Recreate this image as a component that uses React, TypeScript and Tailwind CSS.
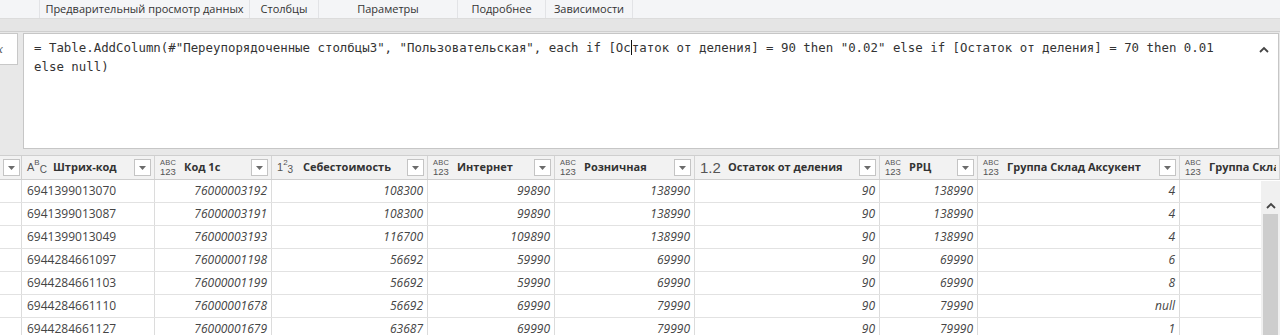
import React from "react";

const cols = [22, 133, 117, 156, 127, 140, 185, 98, 202, 100];

type Hdr = { icon: "abc123" | "abc" | "123" | "12"; label: string; dd: boolean };

const headers: Hdr[] = [
  { icon: "abc", label: "Штрих-код", dd: true },
  { icon: "abc123", label: "Код 1с", dd: true },
  { icon: "123", label: "Себестоимость", dd: true },
  { icon: "abc123", label: "Интернет", dd: true },
  { icon: "abc123", label: "Розничная", dd: true },
  { icon: "12", label: "Остаток от деления", dd: true },
  { icon: "abc123", label: "РРЦ", dd: true },
  { icon: "abc123", label: "Группа Склад Аксукент", dd: true },
  { icon: "abc123", label: "Группа Склад Аксукент 2", dd: false },
];

const rows = [
  ["6941399013070", "76000003192", "108300", "99890", "138990", "90", "138990", "4"],
  ["6941399013087", "76000003191", "108300", "99890", "138990", "90", "138990", "4"],
  ["6941399013049", "76000003193", "116700", "109890", "138990", "90", "138990", "4"],
  ["6944284661097", "76000001198", "56692", "59990", "69990", "90", "69990", "6"],
  ["6944284661103", "76000001199", "56692", "59990", "69990", "90", "69990", "8"],
  ["6944284661110", "76000001678", "56692", "69990", "79990", "90", "79990", "null"],
  ["6944284661127", "76000001679", "63687", "69990", "79990", "90", "79990", "1"],
];

function Dropdown() {
  return (
    <div className="w-[17px] h-[17px] shrink-0 border border-[#c4c4c4] bg-white flex items-center justify-center">
      <svg width="7" height="4" viewBox="0 0 7 4">
        <path d="M0 0 L7 0 L3.5 4 Z" fill="#6b6b6b" />
      </svg>
    </div>
  );
}

function TypeIcon({ t }: { t: Hdr["icon"] }) {
  if (t === "abc123")
    return (
      <div className="flex flex-col w-[18px] shrink-0 text-[#555] leading-[8px] font-['Liberation_Sans',sans-serif]">
        <span className="text-[7.5px] tracking-[0.2px]">ABC</span>
        <span className="text-[9.5px] leading-[9px]">123</span>
      </div>
    );
  if (t === "abc")
    return (
      <div className="w-[20px] shrink-0 text-[#555] font-['Liberation_Sans',sans-serif] text-[11px] leading-none flex items-start">
        <span className="mt-[2px]">A</span>
        <span className="text-[8px] -mt-[1px]">B</span>
        <span className="text-[10px] mt-[5px]">C</span>
      </div>
    );
  if (t === "123")
    return (
      <div className="w-[20px] shrink-0 text-[#555] font-['Liberation_Sans',sans-serif] text-[11px] leading-none flex items-start">
        <span className="mt-[2px]">1</span>
        <span className="text-[8px] -mt-[1px]">2</span>
        <span className="text-[10px] mt-[5px]">3</span>
      </div>
    );
  return (
    <div className="w-[22px] shrink-0 text-[#555] font-['Liberation_Sans',sans-serif] text-[15px] leading-none">1.2</div>
  );
}

function ChevronUp({ className }: { className?: string }) {
  return (
    <svg width="10" height="7" viewBox="0 0 10 7" className={className}>
      <path d="M1 6 L5 2 L9 6" fill="none" stroke="#444" strokeWidth="1.8" />
    </svg>
  );
}

const tabs: { label: string; w: number }[] = [
  { label: "Предварительный просмотр данных", w: 210 },
  { label: "Столбцы", w: 69 },
  { label: "Параметры", w: 139 },
  { label: "Подробнее", w: 88 },
  { label: "Зависимости", w: 88 },
];

export default function App() {
  const line1 =
    '= Table.AddColumn(#"Переупорядоченные столбцы3", "Пользовательская", each if [Ос';
  const line1b =
    'таток от деления] = 90 then "0.02" else if [Остаток от деления] = 70 then 0.01';
  return (
    <div className="w-[1280px] h-[335px] overflow-hidden bg-[#e8e8e8] font-['Open_Sans','Noto_Sans',sans-serif] flex flex-col">
      {/* Tab bar */}
      <div className="h-[19px] shrink-0 bg-[#f4f5f7] flex pl-[39px] border-b border-[#dcdcdc]">
        {tabs.map((t) => (
          <div
            key={t.label}
            style={{ width: t.w }}
            className="border-l border-[#e2e3e6] last:border-r flex items-center justify-center text-[11px] text-[#333] whitespace-nowrap"
          >
            {t.label}
          </div>
        ))}
      </div>
      {/* gray strip */}
      <div className="h-[13px] shrink-0 bg-[#e5e5e5] border-b border-[#cfcfcf]" />
      {/* formula area */}
      <div className="h-[117px] shrink-0 flex bg-[#e8e8e8] pt-[1px]">
        <div className="w-[18px] h-[32px] shrink-0 bg-white border border-l-0 border-[#c8c8c8] flex items-center overflow-hidden">
          <span className="-ml-[3px] text-[13px] text-[#555] italic font-['Liberation_Serif',serif]">x</span>
        </div>
        <div className="ml-[5px] w-[1256px] h-[116px] bg-white border border-[#c6c6c6] pl-[10px] pt-[4px] relative">
          <div className="font-['DejaVu_Sans_Mono',monospace] text-[12.4px] leading-[19px] text-[#333] whitespace-pre">
            <div>
              {line1}
              <span className="inline-block w-0 h-[15px] border-l border-[#111] align-middle -mt-[2px]" />
              {line1b}
            </div>
            <div>else null)</div>
          </div>
          <ChevronUp className="absolute right-[9px] top-[12px]" />
        </div>
      </div>
      {/* gap */}
      <div className="h-[6px] shrink-0 bg-[#e8e8e8]" />
      {/* table */}
      <div className="flex-1 bg-white relative border-t border-[#cfcfcf]">
        {/* header */}
        <div className="flex h-[24px] bg-[#f2f2f2] border-b border-[#cfcfcf]">
          <div style={{ width: cols[0] }} className="shrink-0 flex items-center pl-[3px] border-r border-[#cfcfcf]">
            <Dropdown />
          </div>
          {headers.map((h, i) => (
            <div
              key={i}
              style={{ width: cols[i + 1] }}
              className="shrink-0 flex items-center pl-[5px] pr-[3px] border-r border-[#d4d4d4] overflow-hidden whitespace-nowrap"
            >
              <TypeIcon t={h.icon} />
              <span className="ml-[6px] flex-1 text-[11px] font-bold text-[#333] overflow-hidden">{h.label}</span>
              {h.dd && <Dropdown />}
            </div>
          ))}
        </div>
        {/* rows */}
        {rows.map((r, ri) => (
          <div key={ri} className="flex h-[23px] border-b border-[#e2e2e2] text-[12px] text-[#444]">
            <div style={{ width: cols[0] }} className="shrink-0 border-r border-[#dcdcdc]" />
            {r.map((v, ci) => (
              <div
                key={ci}
                style={{ width: cols[ci + 1] }}
                className={
                  ci === 0
                    ? "shrink-0 flex items-center pl-[5px] border-r border-[#dcdcdc]"
                    : "shrink-0 flex items-center justify-end pr-[4px] italic border-r border-[#dcdcdc]"
                }
              >
                {v}
              </div>
            ))}
            <div style={{ width: cols[9] }} className="shrink-0" />
          </div>
        ))}
        {/* scrollbar overlay */}
        <div className="absolute right-0 top-[25px] bottom-0 w-[19px] bg-[#f0f0f0] flex flex-col items-center">
          <ChevronUp className="mt-[21px]" />
          <div className="mt-[5px] w-[15px] flex-1 bg-[#cdcdcd]" />
        </div>
      </div>
    </div>
  );
}
